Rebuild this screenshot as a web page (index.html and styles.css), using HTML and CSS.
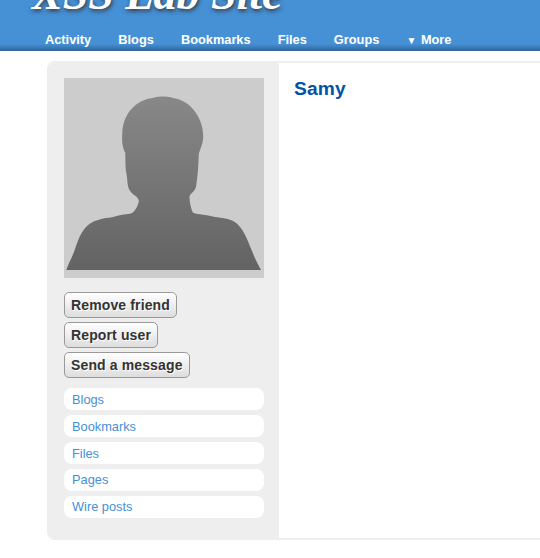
FILE: index.html
```html
<!DOCTYPE html>
<html lang="en">
<head>
<meta charset="utf-8">
<title>XSS Lab Site: Samy</title>
<link rel="stylesheet" href="styles.css">
</head>
<body>
<header class="header">
  <h1 class="site-title">XSS Lab Site</h1>
  <nav class="site-menu">
    <a>Activity</a>
    <a>Blogs</a>
    <a>Bookmarks</a>
    <a>Files</a>
    <a>Groups</a>
    <a><span class="arrow">▼</span> More</a>
  </nav>
</header>
<main class="profile">
  <aside class="sidebar">
    <svg class="avatar" viewBox="0 0 200 200" role="img" aria-label="Samy">
      <defs>
        <linearGradient id="shade" x1="0" y1="0" x2="0" y2="1">
          <stop offset="0" stop-color="#888"/>
          <stop offset="1" stop-color="#636363"/>
        </linearGradient>
      </defs>
      <rect width="200" height="200" fill="#ccc"/>
      <path fill="url(#shade)" d="M2.3 192C6 182 9 178 12 168C17 153 23 145 34 142C40 140 44 140 48 139.300C56 136.500 61 136.500 66 135.700C70 135 73 130 74.700 124C75.500 119 70 118 66.500 113.500C63.500 110 63.500 104 63 99C61 90 61.500 82 61.300 75C57.500 68 58 61 58.300 55C59 38 69 25 84 20.800C90 20 92 18.500 99 18.500C106 18.500 108 20 113 20.800C129 25 139.500 43 139.200 58C139.200 67 136 70 134.700 77C134.500 88 133.500 100 132 109C130 115 126 115 125.500 119C125.500 124 127 130 128.500 134C131 137 139 135.500 151 139C158 140 165 140.500 170 143.500C179 149 183 161 188 173C191 181 194 186 197 192Z"/>
    </svg>
    <div class="actions">
      <a class="button">Remove friend</a>
      <a class="button">Report user</a>
      <a class="button">Send a message</a>
    </div>
    <ul class="content-menu">
      <li>Blogs</li>
      <li>Bookmarks</li>
      <li>Files</li>
      <li>Pages</li>
      <li>Wire posts</li>
    </ul>
  </aside>
  <section class="details">
    <h2>Samy</h2>
  </section>
</main>
</body>
</html>
```
FILE: styles.css
```css
* { box-sizing: border-box; }
body {
  margin: 0;
  height: 558px;
  overflow: hidden;
  background: #fff;
  font-family: "Liberation Sans", Arial, sans-serif;
  font-size: 12.8px;
}
.header {
  height: 51px;
  overflow: hidden;
  background: linear-gradient(to bottom, #4690d6 0, #4690d6 44px, #326497 51px);
}
.site-title {
  margin: -32px 0 0 32px;
  height: 61px;
  font: italic bold 46px/51px "Liberation Serif", "Times New Roman", serif;
  color: #fff;
  text-shadow: 1px 2px 4px #333;
  white-space: nowrap;
}
.site-menu {
  display: flex;
  gap: 27.05px;
  margin-left: 45px;
  color: #fff;
  font-weight: bold;
  line-height: 21px;
}
.arrow { margin-right: 1px; font-size: 10px; font-weight: normal; }
.profile {
  display: flex;
  height: 479px;
  margin: 10px 0 0 47px;
  border: solid #eee;
  border-width: 2px 0;
  border-radius: 8px 0 0 8px;
  overflow: hidden;
}
.sidebar {
  width: 232px;
  padding: 15px 15px 0 17px;
  background: #eee;
}
.avatar { display: block; width: 200px; height: 200px; }
.actions {
  display: flex;
  flex-direction: column;
  align-items: flex-start;
  gap: 4px;
  margin-top: 14px;
}
.button {
  height: 26px;
  padding: 0 6px;
  border: 1px solid #999;
  border-radius: 5px;
  background: linear-gradient(#fff, #ddd);
  color: #333;
  font-size: 14px;
  font-weight: bold;
  letter-spacing: 0.13px;
  line-height: 25px;
  text-shadow: 1px 1px 0 #fff;
}
.content-menu {
  display: grid;
  gap: 5px;
  margin: 10px 0 0;
  padding: 0;
  list-style: none;
}
.content-menu li {
  height: 22px;
  padding-left: 8px;
  border-radius: 8px;
  background: #fff;
  color: #4690d6;
  line-height: 23px;
}
.content-menu li:nth-child(n+4) { line-height: 21px; }
.details { flex: 1; padding: 14px 15px; }
.details h2 {
  margin: 0;
  color: #0054a7;
  font-size: 19.2px;
  letter-spacing: 0.15px;
  line-height: 23px;
}
```
